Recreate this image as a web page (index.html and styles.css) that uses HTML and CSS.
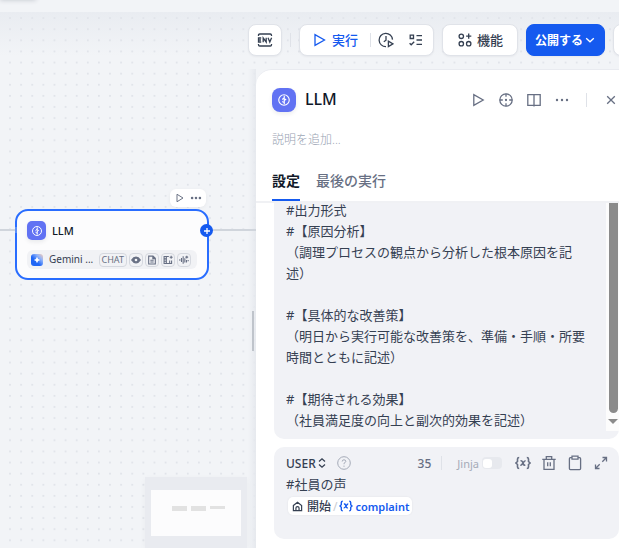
FILE: index.html
```html
<!DOCTYPE html>
<html lang="ja">
<head>
<meta charset="utf-8">
<title>LLM</title>
<link rel="stylesheet" href="styles.css">
</head>
<body>
<div class="app">
  <header class="topbar"></header>
  <main class="workspace">
    <svg class="dots" aria-hidden="true">
      <defs>
        <pattern id="dot-grid" x="4.5" y="0.6" width="11.111" height="11.111" patternUnits="userSpaceOnUse">
          <circle cx="5.5" cy="5.5" r="1" fill="#e0e3e9"/>
        </pattern>
      </defs>
      <rect width="100%" height="100%" fill="url(#dot-grid)"/>
    </svg>

    <div class="toolbar">
      <button class="card-btn env" aria-label="ENV">
        <svg class="i16" viewBox="0 0 16 16"><path d="M1.500 4V3.200Q1.500 2 2.700 2h10.600q1.200 0 1.200 1.200V4M1.500 12v.8q0 1.200 1.200 1.200h10.600q1.200 0 1.200-1.200V12"/><path d="M4.200 6H1.500v4h2.700M1.500 8h2.500M6.200 10.300V6l3 4V5.700M11 5.700l1.800 4.300 1.800-4.300"/></svg>
      </button>
      <span class="rule toolbar-rule"></span>
      <div class="card-btn run-group">
        <button class="run"><svg class="i16" viewBox="0 0 16 16"><path d="M3 2.600v10.800L12.500 8z"/></svg>実行</button>
        <span class="rule"></span>
        <button class="tool" aria-label="履歴"><svg class="i16" viewBox="0 0 16 16"><path d="M14.5 7.600A6.700 6.700 0 1 0 8 14.700M8 4v4.200L5.800 9.800"/><path d="M10.400 9.200v5.400l4.600-2.700z"/></svg></button>
        <button class="tool" aria-label="チェックリスト"><svg class="i16" viewBox="0 0 16 16"><path d="M2.200 3.200h3.300v3.300H2.200zM1.600 11.200l1.600 1.600 3-3M8.500 3.600H14M8.500 8H14M8.500 12.400H14"/></svg></button>
      </div>
      <button class="card-btn features"><svg class="i16" viewBox="0 0 16 16"><circle cx="4.300" cy="4.300" r="2.200"/><circle cx="4.300" cy="11.700" r="2.200"/><circle cx="11.700" cy="11.700" r="2.200"/><path d="M11.700 1.600v5.200M9.100 4.200h5.200"/></svg>機能</button>
      <button class="publish">公開する<svg class="i12" viewBox="0 0 12 12"><path d="M2.200 4.200 6 7.800l3.800-3.600"/></svg></button>
      <button class="card-btn env" aria-label="バージョン履歴"></button>
    </div>

    <div class="stage">
      <section class="canvas" aria-label="ワークフロー">
        <span class="edge edge-in"></span>
        <span class="edge edge-out"></span>
        <div class="node-tools">
          <button aria-label="ノードを実行"><svg class="i12" viewBox="0 0 16 16"><path d="M4 3v10l8-5z"/></svg></button>
          <button aria-label="その他"><svg class="i12" viewBox="0 0 16 16"><g class="dots3"><circle cx="2.800" cy="8" r="1.700"/><circle cx="8" cy="8" r="1.700"/><circle cx="13.200" cy="8" r="1.700"/></g></svg></button>
        </div>
        <article class="node">
          <div class="node-head">
            <span class="llm-icon small"><svg viewBox="0 0 16 16"><circle cx="8" cy="8" r="6"/><path d="M8.300 3.200v9.600M8.300 5.500 6 7.400M8.300 8.600l2.200-1.800M8.300 11 6 9.600"/></svg></span>
            <span class="node-title">LLM</span>
          </div>
          <div class="model">
            <svg class="gemini" viewBox="0 0 12 12"><defs><linearGradient id="gem" x1="0" y1="1" x2="1" y2="0"><stop offset=".4" stop-color="#1f66f5"/><stop offset=".7" stop-color="#8eb2fb"/><stop offset="1" stop-color="#f6cdb8"/></linearGradient></defs><rect width="12" height="12" rx="3" fill="url(#gem)"/><path d="M6 2.800Q6.500 5.500 9.200 6 6.500 6.500 6 9.200 5.500 6.500 2.800 6 5.500 5.500 6 2.800z" fill="#fff"/></svg>
            <span class="model-name">Gemini ...</span>
            <span class="tag">CHAT</span>
            <span class="tag icon"><svg viewBox="0 0 12 12"><path class="fill" d="M.8 6Q3 2.500 6 2.500T11.200 6Q9 9.500 6 9.500T.8 6z"/><circle cx="6" cy="6" r="1.600" fill="#f4f5f8" stroke="none"/></svg></span>
            <span class="tag icon"><svg viewBox="0 0 12 12"><path d="M2 1.300h5.200L10 4v6.700H2zM7 1.500V4.300h2.800M4 6.300h4M4 8.400h4"/></svg></span>
            <span class="tag icon"><svg viewBox="0 0 12 12"><path d="M7 1.800H1.300v8.400h9V6.500M4 1.800v8.400M1.300 4.600H4M1.300 7.400H4M8 6.500v3.500M9.800.8v3.600M8 2.600h3.600"/></svg></span>
            <span class="tag icon"><svg viewBox="0 0 12 12"><path d="M1 5v2M3 3.500v5M5 1.500v9M7 4v5M9 6v3M11 6v1.500M9.300.8v3.400M7.600 2.500H11"/></svg></span>
          </div>
          <button class="handle" aria-label="次のノードを追加"><svg viewBox="0 0 12 12"><path d="M6 3v6M3 6h6"/></svg></button>
        </article>
        <div class="minimap"><div class="minimap-view"><i></i><i></i><i class="short"></i></div></div>
        <span class="resizer"></span>
      </section>

      <aside class="panel">
        <div class="panel-head">
          <span class="llm-icon"><svg viewBox="0 0 16 16"><circle cx="8" cy="8" r="6"/><path d="M8.300 3.200v9.600M8.300 5.500 6 7.400M8.300 8.600l2.200-1.800M8.300 11 6 9.600"/></svg></span>
          <h1>LLM</h1>
          <div class="actions">
            <button aria-label="実行"><svg class="i16" viewBox="0 0 16 16"><path d="M3.800 2.600v10.800L13.200 8z"/></svg></button>
            <button aria-label="位置を表示"><svg class="i16" viewBox="0 0 16 16"><circle cx="8" cy="8" r="6.200"/><path d="M8 1.800v3M8 11.200v3M1.800 8h3M11.200 8h3"/><circle class="fill" cx="8" cy="8" r=".5"/></svg></button>
            <button aria-label="ヘルプ"><svg class="i16" viewBox="0 0 16 16"><path d="M1.800 2.600h12.400v10.800H1.800zM8 2.600v12"/></svg></button>
            <button aria-label="その他"><svg class="i16" viewBox="0 0 16 16"><g class="dots3"><circle cx="3" cy="8" r="1.200"/><circle cx="8" cy="8" r="1.200"/><circle cx="13" cy="8" r="1.200"/></g></svg></button>
            <span class="rule"></span>
            <button aria-label="閉じる"><svg class="i16" viewBox="0 0 16 16"><path d="m4.200 4.200 7.600 7.600M11.800 4.200l-7.600 7.600"/></svg></button>
          </div>
        </div>
        <input class="desc" aria-label="説明" placeholder="説明を追加...">
        <nav class="tabs">
          <button class="tab active">設定</button>
          <button class="tab">最後の実行</button>
        </nav>
        <div class="panel-body">
          <section class="prompt system">
            <div class="scroller">
              <textarea rows="11" aria-label="SYSTEM プロンプト" spellcheck="false">#出力形式
#【原因分析】
（調理プロセスの観点から分析した根本原因を記述）

#【具体的な改善策】
（明日から実行可能な改善策を、準備・手順・所要時間とともに記述）

#【期待される効果】
（社員満足度の向上と副次的効果を記述）</textarea>
            </div>
            <div class="scrollbar"><span class="thumb"></span><svg viewBox="0 0 13 18"><path d="M2 6h10L7 11z" fill="#8b8b8b"/></svg></div>
          </section>
          <section class="prompt user">
            <div class="prompt-head">
              <button class="role">USER<svg viewBox="0 0 8 12"><path d="M1 4.500 4 1.800l3 2.700M1 7.500l3 2.700 3-2.700"/></svg></button>
              <svg class="help" viewBox="0 0 16 16"><circle cx="8" cy="8" r="6.300"/><path d="M6.200 6.500Q6.200 4.800 8 4.800T9.800 6.400Q9.800 7.300 8 8.300v.9M8 10.600v1.200"/></svg>
              <span class="count">35</span>
              <span class="rule"></span>
              <label class="jinja">Jinja<input type="checkbox" role="switch"></label>
              <button aria-label="変数を挿入"><svg class="i16 var" viewBox="0 0 16 16"><path d="M4.200 2.500Q2.500 2.500 2.500 4v2.500L1 8l1.500 1.500V12q0 1.500 1.700 1.500M11.800 2.500q1.700 0 1.700 1.500v2.500L15 8l-1.500 1.500V12q0 1.500-1.700 1.500M5.500 5.800q1.500-.3 2 1l1 2.600q.4 1 1.800.7M10.600 5.700Q9.500 5.600 8 8T5.300 10.200"/></svg></button>
              <button aria-label="削除"><svg class="i16" viewBox="0 0 16 16"><path d="M1.300 4.300h13.400M3 4.300v10h10v-10M5.300 4V1.700h5.400V4M6.700 7.300v4M9.300 7.300v4"/></svg></button>
              <button aria-label="コピー"><svg class="i16" viewBox="0 0 16 16"><path d="M5 2.700H3.400q-1 0-1 1v9.900q0 1 1 1h9.200q1 0 1-1V3.700q0-1-1-1H11M5 1.200h6v3H5z"/></svg></button>
              <button aria-label="拡大"><svg class="i16" viewBox="0 0 16 16"><path d="M9.500 2.500h4v4M13.500 2.500 9.300 6.700M6.500 13.500h-4v-4M2.500 13.500l4.200-4.200"/></svg></button>
            </div>
            <div class="user-text" contenteditable="true" spellcheck="false">
              <div>#社員の声</div>
              <span class="chip"><svg class="home" viewBox="0 0 12 12"><path d="M1.500 5 6 1.300 10.500 5v5.500h-9zM4.300 10.300V7.600q0-1.400 1.700-1.400t1.700 1.400v2.700"/></svg><b class="src">開始</b><span class="slash">/</span><svg class="blue var" viewBox="0 0 16 14"><path d="M4.200 1.500Q2.500 1.500 2.500 3v2.500L1 7l1.500 1.500V11q0 1.500 1.700 1.500M11.800 1.500q1.700 0 1.700 1.500v2.500L15 7l-1.500 1.500V11q0 1.500-1.700 1.500M5.500 4.800q1.500-.3 2 1l1 2.600q.4 1 1.800.7M10.600 4.700Q9.500 4.600 8 7T5.300 9.200"/></svg><b class="name">complaint</b></span>
            </div>
          </section>
        </div>
      </aside>
    </div>
  </main>
</div>
</body>
</html>
```

FILE: styles.css
```css
* { box-sizing: border-box; }

body {
  margin: 0;
  font-family: "Noto Sans", "Noto Sans CJK JP", sans-serif;
  font-size: 13px;
  line-height: 21px;
  color: #354052;
  background: #f2f4f7;
}

button {
  display: flex;
  align-items: center;
  justify-content: center;
  padding: 0;
  border: 0;
  background: none;
  font: inherit;
  color: inherit;
}

svg {
  flex: none;
  fill: none;
  stroke: currentColor;
  stroke-width: 1.3;
}
svg .fill { fill: currentColor; }
svg .dots3 { fill: currentColor; stroke: none; }
svg.var { stroke-width: 1.6; }
.dots, .gemini, .scrollbar svg { stroke: none; }
.i16 { width: 16px; height: 16px; }
.i12 { width: 12px; height: 12px; }

.rule {
  flex: none;
  width: 1px;
  height: 14px;
  background: #dfe2e8;
}

.app {
  display: flex;
  flex-direction: column;
  height: 100vh;
  overflow: hidden;
}
.topbar {
  position: relative;
  flex: none;
  height: 12px;
}
.topbar::before {
  content: "";
  position: absolute;
  top: -7px;
  left: 0;
  width: 36px;
  height: 6px;
  box-shadow: 0 1px 5px #c0c4cc;
}
.workspace {
  position: relative;
  flex: 1;
  min-height: 0;
  display: flex;
  flex-direction: column;
  background: linear-gradient(#e9ecf1, #f2f4f7 44px);
}
.dots {
  position: absolute;
  inset: 0;
  width: 100%;
  height: 100%;
}

/* top toolbar */
.toolbar {
  position: relative;
  flex: none;
  display: flex;
  align-items: center;
  gap: 8px;
  height: 57px;
  padding: 0 0 1px 248px;
  overflow: hidden;
}
.card-btn, .publish {
  flex: none;
  height: 32px;
  border: 1px solid #e0e3e9;
  border-radius: 8px;
  background: #fff;
  box-shadow: 0 1px 2px #1018280d;
}
.env { width: 34px; }
.toolbar-rule { height: 14px; }
.run-group {
  display: flex;
  align-items: center;
  width: 135px;
  padding: 0 1px 0 12px;
}
.run {
  gap: 4px;
  margin-right: 12px;
  color: #155aef;
  font-weight: 500;
}
.run-group .tool { width: 30px; height: 30px; }
.features {
  gap: 4px;
  width: 76px;
  font-weight: 500;
}
.publish {
  gap: 1px;
  width: 79px;
  border-color: #155aef;
  background: #155aef;
  color: #fff;
  font-weight: 700;
  font-size: 12px;
}

/* canvas and panel */
.stage {
  position: relative;
  flex: 1;
  min-height: 0;
  display: grid;
  grid-template-columns: 256px minmax(0, 1fr);
}
.canvas {
  position: relative;
  background: linear-gradient(to left, #e6e9ee, #f2f4f700 8px);
}
.edge {
  position: absolute;
  top: 160px;
  height: 2px;
  background: #d0d5dc;
}
.edge-in { left: 0; width: 15px; }
.edge-out { left: 208px; width: 48px; }
.node-tools {
  position: absolute;
  left: 170px;
  top: 120px;
  display: flex;
  align-items: center;
  justify-content: center;
  gap: 4px;
  width: 36px;
  height: 18px;
  border-radius: 6px;
  background: #fff;
  color: #676f83;
  box-shadow: 0 1px 4px #1018280d;
}
.node {
  position: absolute;
  left: 15px;
  top: 140px;
  width: 194px;
  padding: 10px 10px 9px;
  border: 2px solid #296dff;
  border-radius: 13px;
  background: #fcfcfd;
}
.node::before {
  content: "";
  position: absolute;
  left: -2px;
  top: 16px;
  width: 2px;
  height: 6px;
  background: #5b8ff8;
}
.node-head {
  display: flex;
  align-items: center;
  gap: 6px;
  height: 19px;
  margin-bottom: 10px;
}
.node-title {
  color: #101828;
  font-size: 11px;
  font-weight: 500;
}
.llm-icon {
  flex: none;
  display: flex;
  align-items: center;
  justify-content: center;
  width: 24px;
  height: 24px;
  border-radius: 8px;
  background: #6172f3;
  color: #fff;
  box-shadow: 0 2px 4px #10182814;
}
.llm-icon svg { width: 14px; height: 14px; }
.llm-icon.small { width: 19px; height: 19px; border-radius: 5px; }
.llm-icon.small svg { width: 12px; height: 12px; }
.model {
  display: flex;
  align-items: center;
  gap: 2px;
  height: 19px;
  padding: 0 6px 0 4px;
  border-radius: 6px;
  background: #f1f2f5;
}
.gemini { width: 12px; height: 12px; }
.model-name {
  flex: 1;
  padding-left: 4px;
  font-size: 10px;
  white-space: nowrap;
}
.tag {
  display: flex;
  align-items: center;
  height: 14px;
  padding: 0 2px;
  border: 1px solid #d5d8df;
  border-radius: 4px;
  color: #676f83;
  font-size: 9px;
}
.tag.icon { padding: 0 1px; }
.tag svg { width: 10px; height: 10px; }
.handle {
  position: absolute;
  right: -6px;
  top: 13px;
  width: 13px;
  height: 13px;
  border-radius: 50%;
  background: #155aef;
  color: #fff;
}
.handle svg { width: 12px; height: 12px; }
.minimap {
  position: absolute;
  left: 145px;
  bottom: 0;
  width: 102px;
  height: 71px;
  padding: 13px 6px;
  background: #e9ebf0;
  box-shadow: 0 2px 6px #1018280a;
}
.minimap-view {
  display: flex;
  gap: 4px;
  height: 46px;
  padding: 16px 21px;
  background: #fcfcfd;
}
.minimap i {
  flex: none;
  width: 15px;
  height: 5px;
  background: #e2e2e2;
}
.minimap .short { height: 3px; }
.resizer {
  position: absolute;
  left: 252px;
  top: 242px;
  width: 2px;
  height: 40px;
  background: #bfc4cb;
}

.panel {
  position: relative;
  display: flex;
  flex-direction: column;
  min-height: 0;
  border-top: 1px solid #e9ebf0;
  border-radius: 16px 0 0 0;
  background: #fff;
  overflow: hidden;
}
.panel-head {
  flex: none;
  display: flex;
  align-items: center;
  gap: 9px;
  height: 59px;
  padding-left: 16px;
}
h1 {
  margin: 0;
  color: #101828;
  font-size: 16px;
  font-weight: 500;
}
.actions {
  display: flex;
  align-items: center;
  gap: 12px;
  margin-left: auto;
  color: #676f83;
}
.actions .rule { margin: 0 4px; }
.desc {
  flex: none;
  height: 20px;
  margin: 0 16px;
  padding: 0;
  border: 0;
  font: inherit;
  font-size: 12px;
  font-weight: 300;
}
.desc::placeholder { color: #98a2b2; opacity: 1; }
.tabs {
  flex: none;
  display: flex;
  gap: 16px;
  height: 54px;
  padding: 12px 16px 0;
  border-bottom: 2px solid #f0f1f4;
}
.tab {
  height: 40px;
  border-bottom: 2px solid transparent;
  color: #676f83;
  font-weight: 500;
  font-size: 14px;
}
.tab.active {
  border-color: #155aef;
  color: #101828;
  font-weight: 700;
}

.panel-body {
  display: flex;
  flex-direction: column;
  gap: 8px;
  padding-left: 18px;
}
.prompt { background: #f1f2f6; }
.system {
  display: flex;
  padding-bottom: 8px;
  border-radius: 0 0 10px 10px;
}
.scroller {
  flex: 1;
  display: flex;
  flex-direction: column;
  justify-content: flex-end;
  height: 228px;
  padding: 0 12px;
  overflow: hidden;
}
textarea {
  flex: none;
  display: block;
  width: 100%;
  padding: 0;
  border: 0;
  background: none;
  font: inherit;
  color: inherit;
  resize: none;
  overflow: hidden;
}
.scrollbar {
  display: flex;
  flex-direction: column;
  width: 13px;
  background: #fcfcfc;
}
.thumb {
  flex: 1;
  margin: 0 1px 0 3px;
  border-radius: 0 0 5px 5px;
  background: #8b8b8b;
}
.scrollbar svg { width: 13px; height: 18px; }

.user {
  height: 92px;
  padding: 5px 10px 5px 12px;
  border-radius: 10px;
}
.prompt-head {
  display: flex;
  align-items: center;
  gap: 10px;
  height: 22px;
  color: #676f83;
}
.role {
  gap: 2px;
  color: #354052;
  font-size: 12px;
  font-weight: 500;
}
.role svg { width: 8px; height: 12px; }
.help {
  width: 16px;
  height: 16px;
  margin-right: auto;
  color: #a5abb8;
  stroke-width: 1;
}
.count {
  font-size: 12px;
  font-weight: 500;
}
.prompt-head .rule { margin-right: 5px; }
.jinja {
  display: flex;
  align-items: center;
  gap: 3px;
  margin-right: 3px;
  color: #a5abb8;
  font-size: 11px;
}
.jinja input {
  appearance: none;
  display: flex;
  align-items: center;
  width: 20px;
  height: 12px;
  margin: 0;
  padding: 1px;
  border-radius: 4px;
  background: #e7e9ee;
}
.jinja input::before {
  content: "";
  width: 9px;
  height: 9px;
  border-radius: 3px;
  background: #fff;
}
.user-text { outline: 0; }
.chip {
  display: inline-flex;
  align-items: center;
  height: 18px;
  margin: 2px 2px;
  padding: 0 3px 0 4px;
  border-radius: 5px;
  background: #fff;
  box-shadow: 0 0 2px #10182814;
  font-size: 12px;
}
.home { width: 11px; height: 11px; }
.chip b { font-weight: 500; }
.src { margin-left: 4px; }
.slash { margin: 0 2px; color: #c8ccd4; }
.blue { width: 14px; height: 12px; color: #155aef; }
.chip .name {
  margin-left: 2px;
  color: #155aef;
  font-size: 11px;
  font-weight: 600;
}
```
